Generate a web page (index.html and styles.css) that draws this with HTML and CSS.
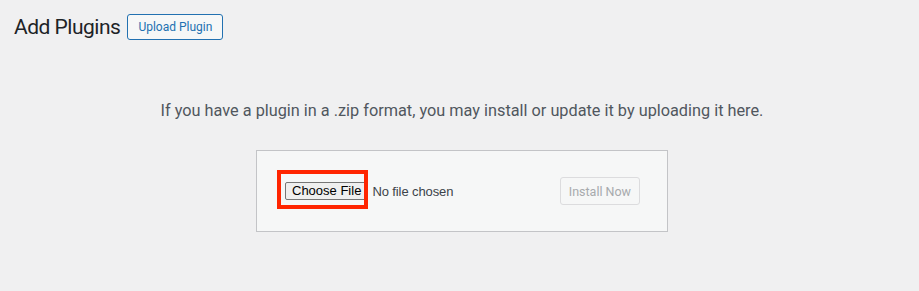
FILE: index.html
```html
<!DOCTYPE html>
<html lang="en">
	<head>
		<meta charset="UTF-8" />
		<meta name="viewport" content="width=device-width, initial-scale=1.0" />
		<title>Add Plugins</title>
		<link rel="stylesheet" href="styles.css">
	</head>
	<body>
		<div class="wrap">
			<div class="page-header">
				<h1>Add Plugins</h1>
				<a class="page-title-action" href="#">Upload Plugin</a>
			</div>

			<div class="upload-plugin">
				<p class="install-help">If you have a plugin in a .zip format, you may install or update it by uploading it here.</p>
				<form class="wp-upload-form">
					<div class="file-field">
						<span class="file-button">Choose File</span>
						<span class="file-name">No file chosen</span>
						<span class="highlight"></span>
					</div>
					<button type="button" class="install-button" disabled>Install Now</button>
				</form>
			</div>
		</div>
	</body>
</html>
```

FILE: styles.css
```css
body {
	margin: 0;
	background-color: #f0f0f1;
	color: #1d2327;
	font-family: 'Roboto', 'Liberation Sans', sans-serif;
}
.wrap {
	padding: 14px 8px 0 13px;
}
.page-header {
	display: flex;
	align-items: center;
	gap: 7px;
	margin-left: 1px;
}
h1 {
	margin: 0;
	font-size: 21px;
	font-weight: 400;
	letter-spacing: -0.5px;
	line-height: 26px;
}
.page-title-action {
	display: inline-block;
	padding: 0 10px;
	height: 26px;
	line-height: 24px;
	box-sizing: border-box;
	border: 1px solid #2271b1;
	border-radius: 3px;
	background-color: #f6f7f7;
	color: #2271b1;
	font-size: 12px;
	text-decoration: none;
}
.upload-plugin {
	display: flex;
	flex-direction: column;
	align-items: center;
}
.install-help {
	margin: 60px 0 0;
	color: #50575e;
	font-size: 16.3px;
	line-height: 22px;
}
.wp-upload-form {
	margin-top: 28px;
	width: 412px;
	box-sizing: border-box;
	display: flex;
	align-items: center;
	justify-content: space-between;
	padding: 26px 27px 26px 28px;
	border: 1px solid #c3c4c7;
	background-color: #f6f7f7;
}
.file-field {
	position: relative;
	display: flex;
	align-items: center;
	gap: 4px;
	font-family: 'Liberation Sans', sans-serif;
	font-size: 13px;
}
.file-button {
	display: inline-block;
	height: 18px;
	line-height: 16px;
	box-sizing: border-box;
	padding: 0 6px;
	border: 1px solid #767676;
	border-radius: 2px;
	background-color: #efefef;
	color: #000;
}
.file-name {
	color: #3c434a;
	letter-spacing: -0.1px;
}
.highlight {
	position: absolute;
	left: -8px;
	top: -12px;
	width: 91px;
	height: 39px;
	box-sizing: border-box;
	border: 4px solid #ff2500;
}
.install-button {
	height: 28px;
	padding: 0 8px;
	border: 1px solid #dcdcde;
	border-radius: 3px;
	background-color: #f6f7f7;
	color: #a7aaad;
	font-family: inherit;
	font-size: 12.5px;
}
```
